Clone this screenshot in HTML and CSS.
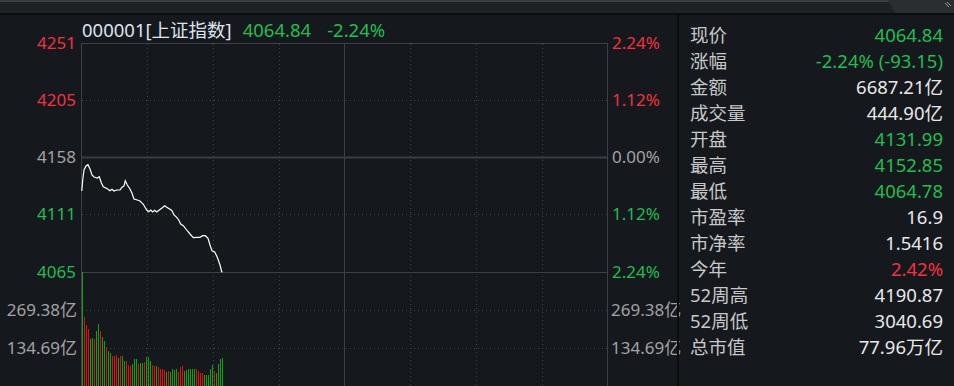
FILE: index.html
```html
<!DOCTYPE html>
<html lang="zh-CN">
<head>
    <meta charset="UTF-8">
    <title>000001 上证指数 分时</title>
    <link rel="stylesheet" href="styles.css">
</head>
<body>
<div class="topbar">
    <div class="tab">
        <svg class="tab-icon" width="8" height="8" viewBox="0 0 8 8"><path d="M1 1L5 5M3 0L7 4" stroke="#9a9a9a" stroke-width="1" fill="none"/></svg>
    </div>
</div>
<div class="main">
    <section class="chart">
        <div class="title">
            <span class="code">000001[上证指数]</span>
            <span class="down price">4064.84</span>
            <span class="down pct">-2.24%</span>
        </div>
        <svg class="plot" width="677" height="343" viewBox="0 0 677 343">
            <!-- grid -->
            <g class="dots" stroke="#3e4147" stroke-width="1" stroke-dasharray="1 3">
                <path d="M82 57.5H607M82 171.5H607M82 267.5H607M82 305.5H607"/>
                <path d="M147.5 1V343M213.5 1V343M279.5 1V343M410.5 1V343M476.5 1V343M542.5 1V343"/>
            </g>
            <g stroke="#3d4045" stroke-width="1" fill="none">
                <path d="M81 0.5H607.5M81.5 0V343M607.5 0V343M344.5 0V343M82 229.5H607"/>
                <path d="M82 114.5H607" stroke-width="2" stroke="#3a3d42"/>
            </g>
            <!-- volume -->
            <path stroke="#12a012" stroke-width="1" d="M82.5 343V229M90.5 343V296M92.5 343V295M96.5 343V288M98.5 343V281M102.5 343V294M104.5 343V298M108.5 343V308M110.5 343V310M118.5 343V315M122.5 343V313M124.5 343V318M132.5 343V321M134.5 343V316M136.5 343V316M140.5 343V320M142.5 343V320M146.5 343V314M148.5 343V314M150.5 343V318M156.5 343V323M166.5 343V329M170.5 343V329M172.5 343V326M174.5 343V327M176.5 343V326M184.5 343V328M186.5 343V327M188.5 343V326M190.5 343V326M192.5 343V326M194.5 343V326M204.5 343V332M206.5 343V332M208.5 343V332M210.5 343V326M212.5 343V322M216.5 343V330M218.5 343V321M220.5 343V316M222.5 343V315"/>
            <path stroke="#e01010" stroke-width="1" d="M84.5 343V274M86.5 343V282M88.5 343V286M94.5 343V296M100.5 343V288M106.5 343V304M112.5 343V313M114.5 343V313M116.5 343V312M120.5 343V313M126.5 343V318M128.5 343V322M130.5 343V323M138.5 343V321M144.5 343V319M152.5 343V322M154.5 343V323M158.5 343V324M160.5 343V326M162.5 343V326M164.5 343V327M168.5 343V328M178.5 343V329M180.5 343V324M182.5 343V323M196.5 343V326M198.5 343V328M200.5 343V330M202.5 343V330M214.5 343V328"/>
            <!-- price -->
            <polyline fill="none" stroke="#ffffff" stroke-width="1.2" points="81.8,148 82.7,137 84,127 86,123 88,121.7 90,126 92,132 94,134 97.3,135 99.3,133.7 101.3,139.7 103.3,143.7 107.3,145.7 110,147.7 112,146.3 114,148 116.7,147 120,147 122,144.3 124,143 125.3,137.7 127.3,142 130,146 132,150.3 134,156 137.3,157 140,158 143.3,161.3 146.7,167 148.7,168.7 150.7,167 152.7,169 154.7,167.3 156.7,169 159.3,167 162,165 164.7,162.7 166.7,164.3 170,166.3 172,167.7 174,172 176.7,174.3 178.7,177 180.7,181 183.3,182.7 186.7,187 190,191 193.3,194.7 196.7,194.3 200,194.3 202.7,192.7 205.3,192.7 208,195.3 210,202 212,207.7 214.7,209 216.7,213 218.3,217 220,222 221.7,228.7 222.5,229"/>
            <!-- axis labels -->
            <g class="axis left">
                <text class="rise" x="76" y="6">4251</text>
                <text class="rise" x="76" y="63">4205</text>
                <text class="flat" x="76" y="120">4158</text>
                <text class="down" x="76" y="177">4111</text>
                <text class="down" x="76" y="235">4065</text>
                <text class="flat" x="77" y="273">269.38亿</text>
                <text class="flat" x="77" y="311">134.69亿</text>
            </g>
            <g class="axis right">
                <text class="rise" x="612" y="6">2.24%</text>
                <text class="rise" x="612" y="63">1.12%</text>
                <text class="flat" x="612" y="120">0.00%</text>
                <text class="down" x="612" y="177">1.12%</text>
                <text class="down" x="612" y="235">2.24%</text>
                <text class="flat" x="611" y="273">269.38亿</text>
                <text class="flat" x="611" y="311">134.69亿</text>
            </g>
        </svg>
    </section>
    <aside class="quote">
        <div class="row"><span class="label">现价</span><span class="down">4064.84</span></div>
        <div class="row"><span class="label">涨幅</span><span class="down">-2.24% (-93.15)</span></div>
        <div class="row"><span class="label">金额</span><span>6687.21亿</span></div>
        <div class="row"><span class="label">成交量</span><span>444.90亿</span></div>
        <div class="row"><span class="label">开盘</span><span class="down">4131.99</span></div>
        <div class="row"><span class="label">最高</span><span class="down">4152.85</span></div>
        <div class="row"><span class="label">最低</span><span class="down">4064.78</span></div>
        <div class="row"><span class="label">市盈率</span><span>16.9</span></div>
        <div class="row"><span class="label">市净率</span><span>1.5416</span></div>
        <div class="row"><span class="label">今年</span><span class="rise">2.42%</span></div>
        <div class="row"><span class="label">52周高</span><span>4190.87</span></div>
        <div class="row"><span class="label">52周低</span><span>3040.69</span></div>
        <div class="row"><span class="label">总市值</span><span>77.96万亿</span></div>
    </aside>
</div>
</body>
</html>
```

FILE: styles.css
```css
body { margin: 0; width: 954px; height: 386px; overflow: hidden; background: #15181d; font-family: "Noto Sans", "Noto Sans CJK SC", sans-serif; color: #e6e6e6; }
.topbar { height: 11px; background: #1e2126; border-top: 2px solid #393c41; border-bottom: 2px solid #0b0c0e; display: flex; justify-content: flex-end; }
.tab { width: 66px; margin-top: -2px; height: 13px; background: #2a2d32; clip-path: polygon(0 0, 100% 0, 100% 100%, 7px 100%); display: flex; justify-content: flex-end; align-items: flex-start; }
.tab-icon { margin: 2px 2px 0 0; }
.main { display: flex; height: 371px; }
.chart { width: 677px; flex: none; }
.title { height: 28px; display: flex; align-items: center; padding-left: 82px; font-size: 18.5px; white-space: nowrap; }
.title .code { color: #dde4ec; }
.title .price { margin-left: 11px; }
.title .pct { margin-left: 16px; }
.plot { display: block; overflow: visible; }
.axis text { font-size: 17px; font-family: "Noto Sans", "Noto Sans CJK SC", sans-serif; }
.axis.left text { text-anchor: end; }
.axis .rise { fill: #f4323c; }
.axis .down { fill: #1fbf4f; }
.axis .flat { fill: #a3a3a3; }
.quote { flex: 1; border-left: 2px solid #0b0c0e; padding: 6px 11px 0 11px; font-size: 18.5px; }
.row { height: 26px; display: flex; justify-content: space-between; align-items: center; color: #e8e8e8; white-space: nowrap; }
.row .label { color: #c8c8c8; }
.down { color: #1fbf4f; }
.rise { color: #f4323c; }
```
